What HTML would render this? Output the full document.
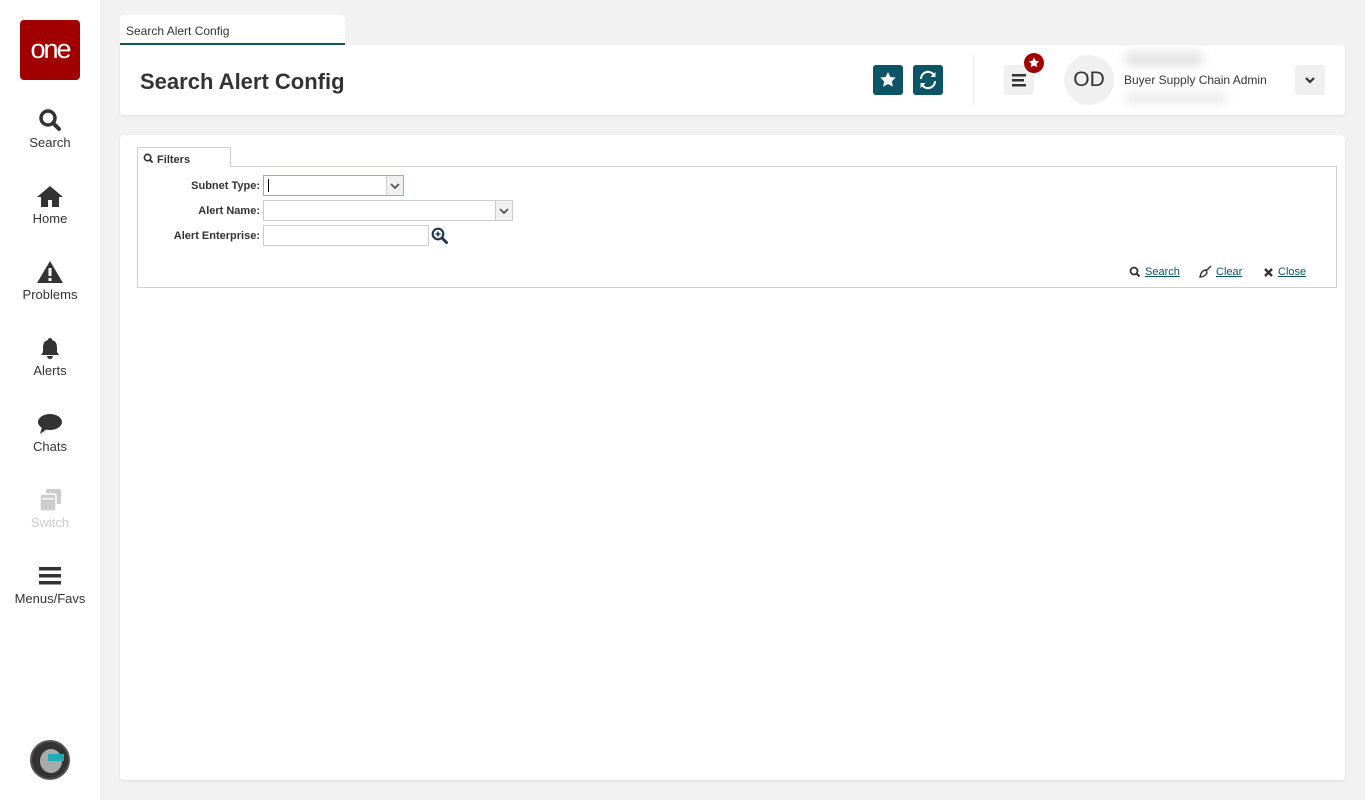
<!DOCTYPE html>
<html><head><meta charset="utf-8"><style>
*{box-sizing:border-box;margin:0;padding:0}
body{width:1365px;height:800px;background:#f2f2f2;font-family:"Liberation Sans",sans-serif;color:#333;position:relative;overflow:hidden}
.side{position:absolute;left:0;top:0;width:100px;height:800px;background:#fff}
.logo{position:absolute;left:20px;top:20px;width:60px;height:60px;background:#a00000;border-radius:4px;color:#fff;font-size:27px;text-align:center;line-height:58px;letter-spacing:-2px}
.nav{position:absolute;left:0;width:100px;text-align:center;font-size:13px;color:#333}
.nav svg{display:block;margin:0 auto 3px}
.card{position:absolute;background:#fff;border-radius:4px;box-shadow:0 1px 3px rgba(0,0,0,.08)}
.tab{position:absolute;left:120px;top:15px;width:225px;height:30px;background:#fff;border-radius:4px 4px 0 0;border-bottom:2px solid #0b5566;font-size:12px;padding:9px 6px;color:#333}
h1{position:absolute;left:140px;top:69px;font-size:22px;font-weight:bold;color:#333}
.btn{position:absolute;width:30px;height:30px;background:#0b5566;border-radius:3px}
.gbtn{position:absolute;width:30px;height:30px;background:#f0f0f0;border-radius:3px}
.lbl{position:absolute;font-size:11px;font-weight:bold;text-align:right;width:130px;left:130px}
.inp{position:absolute;border:1px solid #ccc;background:#fff;height:21px}
.dd{position:absolute;right:0;top:0;width:17px;height:19px;background:#f0f0f0;border-left:1px solid #ccc}
.lnk{position:absolute;font-size:11px;color:#0b5566;text-decoration:underline}
</style></head><body>
<div class="side">
<div class="logo">one</div>
<div class="nav" style="top:108px"><svg width="24" height="24" viewBox="0 0 24 24"><circle cx="10" cy="10" r="7" fill="none" stroke="#333" stroke-width="3.5"/><path d="M15 15l6 6" stroke="#333" stroke-width="4" stroke-linecap="round"/></svg>Search</div>
<div class="nav" style="top:184px"><svg width="28" height="24" viewBox="0 0 28 24"><path d="M14 2L1 13h4v10h7v-7h4v7h7V13h4z" fill="#333"/></svg>Home</div>
<div class="nav" style="top:260px"><svg width="28" height="24" viewBox="0 0 28 24"><path d="M14 1L1 23h26z" fill="#333"/><rect x="12.5" y="8" width="3" height="8" fill="#fff"/><rect x="12.5" y="18" width="3" height="3" fill="#fff"/></svg>Problems</div>
<div class="nav" style="top:336px"><svg width="24" height="24" viewBox="0 0 24 24"><path d="M12 2a2 2 0 012 2c4 1 5 4 5 8v4l2 3H3l2-3v-4c0-4 1-7 5-8a2 2 0 012-2z" fill="#333"/><path d="M9 20a3 3 0 006 0z" fill="#333"/></svg>Alerts</div>
<div class="nav" style="top:412px"><svg width="26" height="24" viewBox="0 0 26 24"><ellipse cx="13" cy="10" rx="12" ry="8" fill="#333"/><path d="M5 15l-2 7 7-5z" fill="#333"/></svg>Chats</div>
<div class="nav" style="top:488px;color:#ccc"><svg width="26" height="24" viewBox="0 0 26 24"><rect x="9" y="1" width="15" height="15" rx="2" fill="#ccc"/><rect x="3" y="6" width="16" height="17" rx="2" fill="#ccc" stroke="#fff" stroke-width="1.5"/><rect x="5" y="10" width="12" height="1.5" fill="#fff"/></svg>Switch</div>
<div class="nav" style="top:564px"><svg width="26" height="24" viewBox="0 0 26 24"><rect x="2" y="3" width="22" height="3.5" fill="#333"/><rect x="2" y="10" width="22" height="3.5" fill="#333"/><rect x="2" y="17" width="22" height="3.5" fill="#333"/></svg>Menus/Favs</div>
<div style="position:absolute;left:30px;top:740px;width:40px;height:40px;border-radius:50%;background:#333;border:2px solid #555"><div style="position:absolute;left:8px;top:7px;width:22px;height:24px;border-radius:50%;background:#aaa"></div><div style="position:absolute;left:16px;top:12px;width:16px;height:7px;background:#2ab;"></div></div>
</div>
<div class="card" style="left:120px;top:45px;width:1225px;height:70px;border-radius:0 4px 4px 4px"></div>
<div class="tab">Search Alert Config</div>
<h1>Search Alert Config</h1>
<div class="btn" style="left:873px;top:65px"><svg width="30" height="30" viewBox="0 0 30 30"><path d="M15 7l2.4 5 5.4.6-4 3.7 1.1 5.4L15 19l-4.9 2.7 1.1-5.4-4-3.7 5.4-.6z" fill="#fff"/></svg></div>
<div class="btn" style="left:913px;top:65px"><svg width="30" height="30" viewBox="0 0 30 30"><path d="M9 14a6 6 0 0110.5-4l-2 2h5V7l-1.5 1.5A8 8 0 007 14z M21 16a6 6 0 01-10.5 4l2-2h-5v5l1.5-1.5A8 8 0 0023 16z" fill="#fff"/></svg></div>
<div style="position:absolute;left:973px;top:55px;width:1px;height:50px;background:#e8e8e8"></div>
<div class="gbtn" style="left:1004px;top:65px"><svg width="30" height="30" viewBox="0 0 30 30"><rect x="8" y="9" width="14" height="2.5" fill="#333"/><rect x="8" y="14" width="12" height="2.5" fill="#333"/><rect x="8" y="19" width="14" height="2.5" fill="#333"/></svg></div>
<div style="position:absolute;left:1024px;top:53px;width:20px;height:20px;border-radius:50%;background:#a00000"><svg width="20" height="20" viewBox="0 0 20 20"><path d="M10 4.5l1.6 3.3 3.6.4-2.7 2.5.8 3.6L10 12.5l-3.3 1.8.8-3.6-2.7-2.5 3.6-.4z" fill="#fff"/></svg></div>
<div style="position:absolute;left:1064px;top:55px;width:50px;height:50px;border-radius:50%;background:#f0f0f0;font-size:21px;text-align:center;line-height:50px;color:#333">OD</div>
<div style="position:absolute;left:1126px;top:52px;width:76px;height:14px;background:#e2e2e2;filter:blur(5px)"></div>
<div style="position:absolute;left:1124px;top:73px;font-size:12px;color:#333">Buyer Supply Chain Admin</div>
<div style="position:absolute;left:1126px;top:92px;width:100px;height:12px;background:#ebebeb;filter:blur(5px)"></div>
<div class="gbtn" style="left:1295px;top:65px"><svg width="30" height="30" viewBox="0 0 30 30"><path d="M11 13l4 4 4-4" fill="none" stroke="#333" stroke-width="2.2"/></svg></div>

<div class="card" style="left:120px;top:135px;width:1225px;height:645px"></div>
<div style="position:absolute;left:137px;top:166px;width:1200px;height:122px;border:1px solid #d0d0d0"></div>
<div style="position:absolute;left:137px;top:147px;width:94px;height:20px;border:1px solid #d0d0d0;border-bottom:none;background:#fff;font-size:11px;font-weight:bold;padding:5px 0 0 5px"><svg width="11" height="11" viewBox="0 0 12 12" style="vertical-align:-1px"><circle cx="5" cy="5" r="3.5" fill="none" stroke="#333" stroke-width="1.8"/><path d="M7.5 7.5l3 3" stroke="#333" stroke-width="2"/></svg> Filters</div>
<div class="lbl" style="top:180px">Subnet Type:</div>
<div class="inp" style="left:263px;top:175px;width:141px;border-color:#8ab0d0"><div style="position:absolute;left:4px;top:3px;width:1px;height:13px;background:#000"></div><div class="dd"><svg width="16" height="19" viewBox="0 0 16 19"><path d="M4 8l4 4 4-4" fill="none" stroke="#555" stroke-width="1.8"/></svg></div></div>
<div class="lbl" style="top:205px">Alert Name:</div>
<div class="inp" style="left:263px;top:200px;width:250px"><div class="dd"><svg width="16" height="19" viewBox="0 0 16 19"><path d="M4 8l4 4 4-4" fill="none" stroke="#555" stroke-width="1.8"/></svg></div></div>
<div class="lbl" style="top:230px">Alert Enterprise:</div>
<div class="inp" style="left:263px;top:225px;width:166px"></div>
<svg style="position:absolute;left:431px;top:227px" width="17" height="17" viewBox="0 0 17 17"><circle cx="7" cy="7" r="5.3" fill="none" stroke="#1f3b4d" stroke-width="2.2"/><path d="M11 11l4.5 4.5" stroke="#1f3b4d" stroke-width="3" stroke-linecap="round"/><path d="M7 4.5v5M4.5 7h5" stroke="#1f3b4d" stroke-width="1.6"/></svg>
<svg style="position:absolute;left:1129px;top:266px" width="12" height="12" viewBox="0 0 12 12"><circle cx="5" cy="5" r="3.5" fill="none" stroke="#333" stroke-width="1.8"/><path d="M7.5 7.5l3 3" stroke="#333" stroke-width="2"/></svg>
<div class="lnk" style="left:1145px;top:266px">Search</div>
<svg style="position:absolute;left:1199px;top:265px" width="13" height="13" viewBox="0 0 13 13"><path d="M12 1L7 6" stroke="#333" stroke-width="1.5"/><path d="M7 5c-3 0-5 2-6 7 2 0 5-1 7-4z" fill="none" stroke="#333" stroke-width="1.4"/></svg>
<div class="lnk" style="left:1216px;top:266px">Clear</div>
<svg style="position:absolute;left:1263px;top:267px" width="11" height="11" viewBox="0 0 11 11"><path d="M2 2l7 7M9 2l-7 7" stroke="#333" stroke-width="2.4"/></svg>
<div class="lnk" style="left:1278px;top:266px">Close</div>
</body></html>
